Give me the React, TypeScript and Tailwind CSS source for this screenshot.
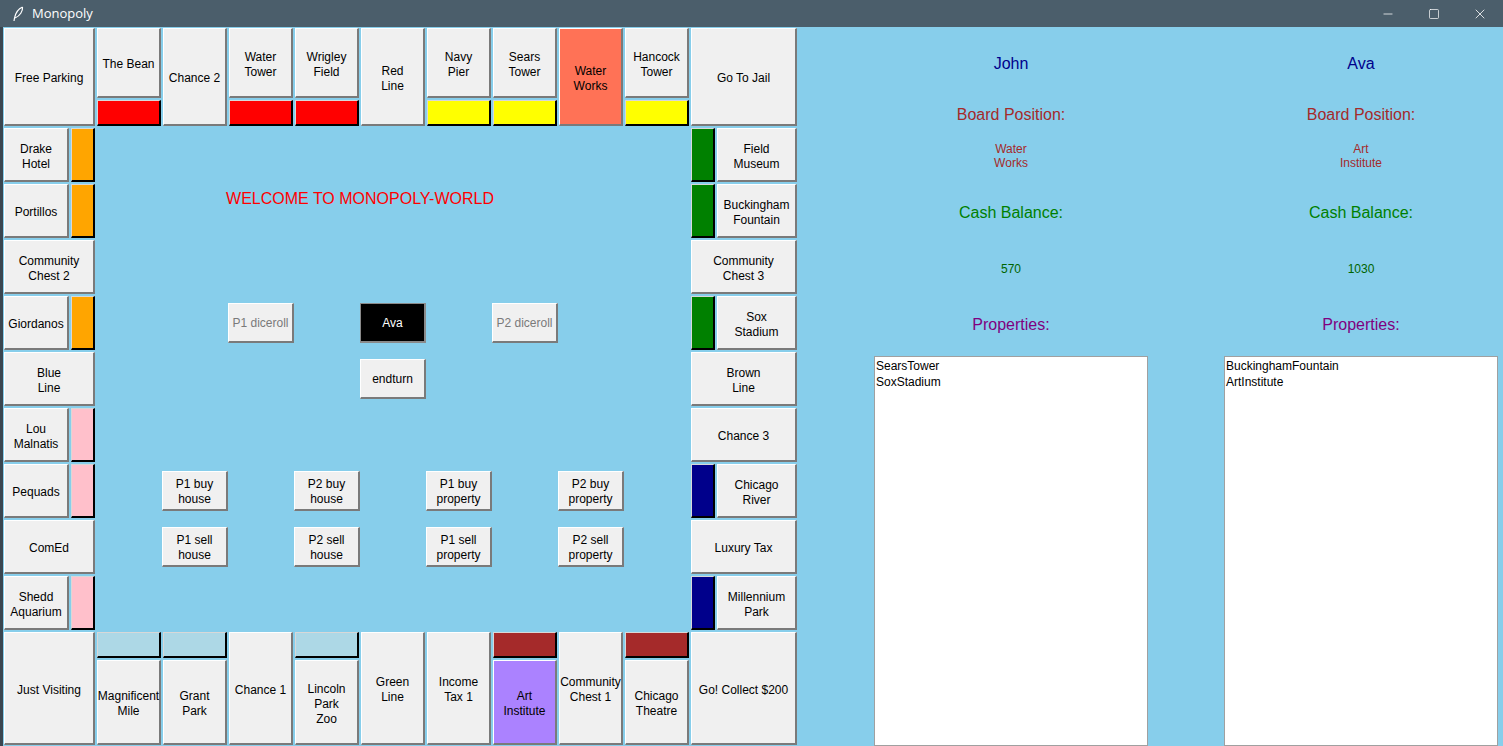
import { Minus, Square, X } from "lucide-react";

type Tile = {
  label: string;
  pos: string;
  bg?: string;
  strip?: string;
};

// board tiles, grid is 13 columns x 13 rows (strips get their own track)
const tiles: Tile[] = [
  { label: "Free Parking", pos: "col-start-1 col-span-2 row-start-1 row-span-2" },
  { label: "The Bean", pos: "col-start-3 row-start-1" },
  { label: "Chance 2", pos: "col-start-4 row-start-1 row-span-2" },
  { label: "Water\nTower", pos: "col-start-5 row-start-1" },
  { label: "Wrigley\nField", pos: "col-start-6 row-start-1" },
  { label: "Red\nLine", pos: "col-start-7 row-start-1 row-span-2" },
  { label: "Navy\nPier", pos: "col-start-8 row-start-1" },
  { label: "Sears\nTower", pos: "col-start-9 row-start-1" },
  { label: "Water\nWorks", pos: "col-start-10 row-start-1 row-span-2", bg: "bg-[#ff7256]" },
  { label: "Hancock\nTower", pos: "col-start-11 row-start-1" },
  { label: "Go To Jail", pos: "col-start-12 col-span-2 row-start-1 row-span-2" },

  { label: "Drake\nHotel", pos: "col-start-1 row-start-3" },
  { label: "Portillos", pos: "col-start-1 row-start-4" },
  { label: "Community\nChest 2", pos: "col-start-1 col-span-2 row-start-5" },
  { label: "Giordanos", pos: "col-start-1 row-start-6" },
  { label: "Blue\nLine", pos: "col-start-1 col-span-2 row-start-7" },
  { label: "Lou\nMalnatis", pos: "col-start-1 row-start-8" },
  { label: "Pequads", pos: "col-start-1 row-start-9" },
  { label: "ComEd", pos: "col-start-1 col-span-2 row-start-10" },
  { label: "Shedd\nAquarium", pos: "col-start-1 row-start-11" },

  { label: "Field\nMuseum", pos: "col-start-13 row-start-3" },
  { label: "Buckingham\nFountain", pos: "col-start-13 row-start-4" },
  { label: "Community\nChest 3", pos: "col-start-12 col-span-2 row-start-5" },
  { label: "Sox\nStadium", pos: "col-start-13 row-start-6" },
  { label: "Brown\nLine", pos: "col-start-12 col-span-2 row-start-7" },
  { label: "Chance 3", pos: "col-start-12 col-span-2 row-start-8" },
  { label: "Chicago\nRiver", pos: "col-start-13 row-start-9" },
  { label: "Luxury Tax", pos: "col-start-12 col-span-2 row-start-10" },
  { label: "Millennium\nPark", pos: "col-start-13 row-start-11" },

  { label: "Just Visiting", pos: "col-start-1 col-span-2 row-start-12 row-span-2" },
  { label: "Magnificent\nMile", pos: "col-start-3 row-start-13" },
  { label: "Grant\nPark", pos: "col-start-4 row-start-13" },
  { label: "Chance 1", pos: "col-start-5 row-start-12 row-span-2" },
  { label: "Lincoln\nPark\nZoo", pos: "col-start-6 row-start-13" },
  { label: "Green\nLine", pos: "col-start-7 row-start-12 row-span-2" },
  { label: "Income\nTax 1", pos: "col-start-8 row-start-12 row-span-2" },
  { label: "Art\nInstitute", pos: "col-start-9 row-start-13", bg: "bg-[#ab82ff]" },
  { label: "Community\nChest 1", pos: "col-start-10 row-start-12 row-span-2" },
  { label: "Chicago\nTheatre", pos: "col-start-11 row-start-13" },
  { label: "Go! Collect $200", pos: "col-start-12 col-span-2 row-start-12 row-span-2" },
];

const strips: { pos: string; color: string }[] = [
  { pos: "col-start-3 row-start-2", color: "bg-[#ff0000]" },
  { pos: "col-start-5 row-start-2", color: "bg-[#ff0000]" },
  { pos: "col-start-6 row-start-2", color: "bg-[#ff0000]" },
  { pos: "col-start-8 row-start-2", color: "bg-[#ffff00]" },
  { pos: "col-start-9 row-start-2", color: "bg-[#ffff00]" },
  { pos: "col-start-11 row-start-2", color: "bg-[#ffff00]" },

  { pos: "col-start-2 row-start-3", color: "bg-[#ffa500]" },
  { pos: "col-start-2 row-start-4", color: "bg-[#ffa500]" },
  { pos: "col-start-2 row-start-6", color: "bg-[#ffa500]" },
  { pos: "col-start-2 row-start-8", color: "bg-[#ffc0cb]" },
  { pos: "col-start-2 row-start-9", color: "bg-[#ffc0cb]" },
  { pos: "col-start-2 row-start-11", color: "bg-[#ffc0cb]" },

  { pos: "col-start-12 row-start-3", color: "bg-[#008000]" },
  { pos: "col-start-12 row-start-4", color: "bg-[#008000]" },
  { pos: "col-start-12 row-start-6", color: "bg-[#008000]" },
  { pos: "col-start-12 row-start-9", color: "bg-[#00008b]" },
  { pos: "col-start-12 row-start-11", color: "bg-[#00008b]" },

  { pos: "col-start-3 row-start-12", color: "bg-[#add8e6]" },
  { pos: "col-start-4 row-start-12", color: "bg-[#add8e6]" },
  { pos: "col-start-6 row-start-12", color: "bg-[#add8e6]" },
  { pos: "col-start-9 row-start-12", color: "bg-[#a52a2a]" },
  { pos: "col-start-11 row-start-12", color: "bg-[#a52a2a]" },
];

const controls: { label: string; pos: string; tone?: string }[] = [
  { label: "P1 diceroll", pos: "col-start-5 row-start-6", tone: "disabled" },
  { label: "Ava", pos: "col-start-7 row-start-6", tone: "dark" },
  { label: "P2 diceroll", pos: "col-start-9 row-start-6", tone: "disabled" },
  { label: "endturn", pos: "col-start-7 row-start-7" },
  { label: "P1 buy\nhouse", pos: "col-start-4 row-start-9" },
  { label: "P2 buy\nhouse", pos: "col-start-6 row-start-9" },
  { label: "P1 buy\nproperty", pos: "col-start-8 row-start-9" },
  { label: "P2 buy\nproperty", pos: "col-start-10 row-start-9" },
  { label: "P1 sell\nhouse", pos: "col-start-4 row-start-10" },
  { label: "P2 sell\nhouse", pos: "col-start-6 row-start-10" },
  { label: "P1 sell\nproperty", pos: "col-start-8 row-start-10" },
  { label: "P2 sell\nproperty", pos: "col-start-10 row-start-10" },
];

const players = [
  { name: "John", position: "Water\nWorks", cash: "570", props: ["SearsTower", "SoxStadium"] },
  { name: "Ava", position: "Art\nInstitute", cash: "1030", props: ["BuckinghamFountain", "ArtInstitute"] },
];

function Feather() {
  return (
    <svg width="12" height="16" viewBox="0 0 12 16" fill="none">
      <path d="M10.5 1 C6 3 3.5 7 2.5 12 L2 15" stroke="#ffffff" strokeWidth="1.2" />
      <path d="M10.5 1 C11 5 8 10 3 12" stroke="#ffffff" strokeWidth="1.2" />
    </svg>
  );
}

function TileButton({ tile }: { tile: Tile }) {
  return (
    <div
      className={`${tile.pos} ${tile.bg ?? "bg-[#f0f0f0]"} m-px pt-[4px] flex items-center justify-center whitespace-pre-line text-center text-[12px] leading-[15px] text-black border-t border-l border-t-white border-l-white border-b-2 border-r-2 border-b-[#7a7a7a] border-r-[#7a7a7a]`}
    >
      {tile.label}
    </div>
  );
}

export default function App() {
  return (
    <div className="w-[1503px] h-[746px] overflow-hidden flex flex-col bg-[#87ceeb] font-['Liberation_Sans',Arial,sans-serif]">
      {/* window title bar */}
      <div className="h-[27px] shrink-0 bg-[#4b5e6b] flex items-center text-white">
        <div className="w-[32px] flex justify-center pl-1">
          <Feather />
        </div>
        <span className="text-[13px] font-['Open_Sans',sans-serif]">Monopoly</span>
        <div className="ml-auto flex h-full">
          <div className="w-[46px] flex items-center justify-center">
            <Minus size={14} strokeWidth={1.3} />
          </div>
          <div className="w-[46px] flex items-center justify-center">
            <Square size={12} strokeWidth={1.4} />
          </div>
          <div className="w-[46px] flex items-center justify-center">
            <X size={16} strokeWidth={1.2} />
          </div>
        </div>
      </div>

      <div className="flex flex-1 min-h-0">
        <div className="w-[3px] shrink-0 bg-[#3a4650]" />

        {/* board */}
        <div className="grid shrink-0 grid-cols-[67px_26px_repeat(9,66px)_26px_82px] grid-rows-[72px_28px_repeat(9,56px)_28px_87px]">
          {tiles.map((t) => (
            <TileButton key={t.label} tile={t} />
          ))}
          {strips.map((s) => (
            <div
              key={s.pos}
              className={`${s.pos} ${s.color} m-px border-t border-l border-t-[#d8d8d8] border-l-[#d8d8d8] border-b-2 border-r-2 border-b-black border-r-black`}
            />
          ))}

          <div className="col-start-4 col-span-6 row-start-4 flex justify-center pt-[7px] text-[16px] leading-[18px] text-[#ff0000]">
            WELCOME TO MONOPOLY-WORLD
          </div>

          {controls.map((c) => (
            <div
              key={c.label}
              className={`${c.pos} self-center h-[40px] pt-[2px] flex items-center justify-center whitespace-pre-line text-center text-[12px] leading-[15px] border-t border-l border-b-2 border-r-2 ${
                c.tone === "dark"
                  ? "bg-black text-white border-t-[#8a8a8a] border-l-[#8a8a8a] border-b-[#8a8a8a] border-r-[#8a8a8a]"
                  : "bg-[#f0f0f0] border-t-white border-l-white border-b-[#7a7a7a] border-r-[#7a7a7a]"
              } ${c.tone === "disabled" ? "text-[#7a7a7a]" : c.tone === "dark" ? "" : "text-black"}`}
            >
              {c.label}
            </div>
          ))}
        </div>

        {/* player panels */}
        <div className="flex flex-1 min-w-0 pl-[38px]">
          {players.map((p) => (
            <div key={p.name} className="w-[350px] shrink-0 flex flex-col items-center">
              <div className="mt-[27px] h-[20px] leading-[20px] text-[16px] text-[#00008b]">{p.name}</div>
              <div className="mt-[31px] h-[20px] leading-[20px] text-[16px] text-[#a52a2a]">Board Position:</div>
              <div className="mt-[17px] whitespace-pre-line text-center text-[12px] leading-[14px] text-[#a52a2a]">
                {p.position}
              </div>
              <div className="mt-[33px] h-[20px] leading-[20px] text-[16px] text-[#008000]">Cash Balance:</div>
              <div className="mt-[39px] h-[14px] leading-[14px] text-[12px] text-[#006400]">{p.cash}</div>
              <div className="mt-[39px] h-[20px] leading-[20px] text-[16px] text-[#800080]">Properties:</div>
              <div className="mt-[21px] w-[274px] flex-1 bg-white border border-[#a0a0a0] px-[1px] pt-[1px] text-[12px] leading-[16px] text-black">
                {p.props.map((name) => (
                  <div key={name}>{name}</div>
                ))}
              </div>
            </div>
          ))}
        </div>
      </div>
    </div>
  );
}
